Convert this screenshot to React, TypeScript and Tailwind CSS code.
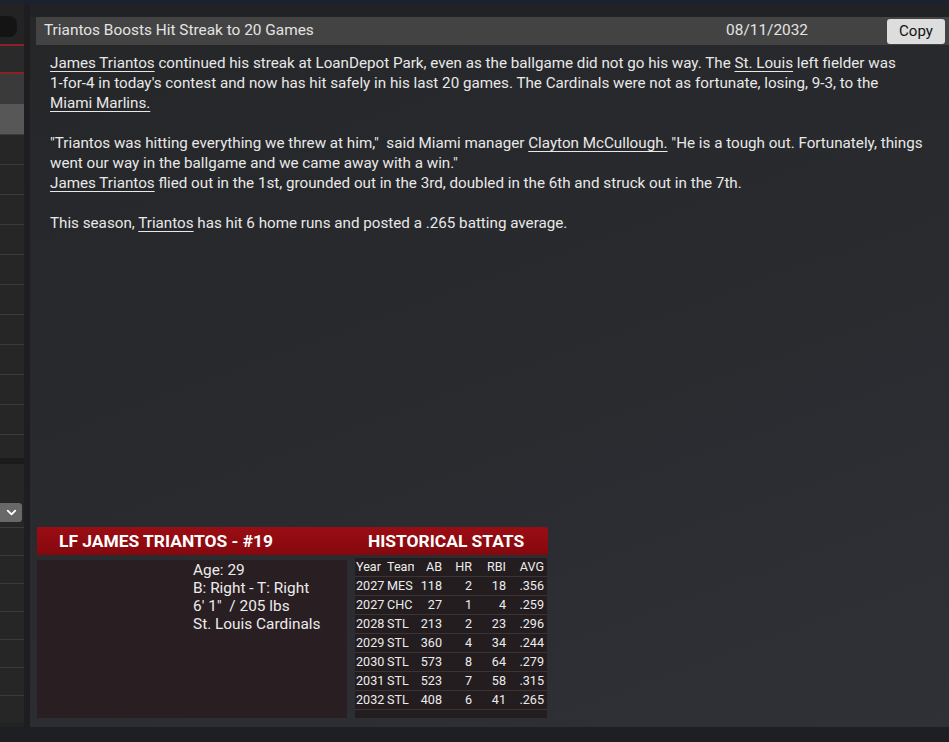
import { ChevronDown } from 'lucide-react';

const stats = [
    { year: '2027', team: 'MES', ab: 118, hr: 2, rbi: 18, avg: '.356' },
    { year: '2027', team: 'CHC', ab: 27, hr: 1, rbi: 4, avg: '.259' },
    { year: '2028', team: 'STL', ab: 213, hr: 2, rbi: 23, avg: '.296' },
    { year: '2029', team: 'STL', ab: 360, hr: 4, rbi: 34, avg: '.244' },
    { year: '2030', team: 'STL', ab: 573, hr: 8, rbi: 64, avg: '.279' },
    { year: '2031', team: 'STL', ab: 523, hr: 7, rbi: 58, avg: '.315' },
    { year: '2032', team: 'STL', ab: 408, hr: 6, rbi: 41, avg: '.265' },
];

function Link({ children }: { children: React.ReactNode }) {
    return <span className="underline underline-offset-[3px] decoration-1">{children}</span>;
}

function Sidebar() {
    const rows = Array.from({ length: 10 });
    const lower = Array.from({ length: 7 });
    return (
        <div className="w-[24px] shrink-0 flex flex-col bg-[#232323] overflow-hidden">
            <div className="h-[13px]" />
            <div className="h-[21px] w-[17px] bg-[#141414] rounded-r-[8px]" />
            <div className="h-[7px]" />
            <div className="h-[2px] bg-[#8a2228]" />
            <div className="h-[26px] bg-[#2a2a2a]" />
            <div className="h-[2px] bg-[#8a2228]" />
            <div className="h-[30px] bg-[#3a3a3a]" />
            <div className="h-[30px] bg-[#575757]" />
            {rows.map((_, i) => (
                <div key={i} className="h-[30px] bg-[#262626] border-t border-[#3a3a3a]" />
            ))}
            <div className="h-[24px] bg-[#262626] border-t border-[#3a3a3a]" />
            <div className="h-[6px] bg-[#1b1b1b]" />
            <div className="h-[39px] bg-[#262626]" />
            <div className="h-[19px] w-[22px] bg-[#686868] rounded-r-[3px] flex items-center justify-center">
                <ChevronDown size={15} strokeWidth={3} className="text-white" />
            </div>
            <div className="h-[5px] bg-[#262626]" />
            {lower.map((_, i) => (
                <div key={i} className="h-[28px] shrink-0 bg-[#262626] border-t border-[#3a3a3a]" />
            ))}
        </div>
    );
}

function PlayerCard() {
    return (
        <div className="ml-[7px] w-[511px] flex flex-col">
            <div className="h-[28px] flex items-center rounded-tr-[3px] bg-[linear-gradient(180deg,#9a0d14,#85080e)] text-white font-bold text-[17.4px]">
                <span className="pl-[22px] w-[331px]">LF JAMES TRIANTOS - #19</span>
                <span>HISTORICAL STATS</span>
            </div>
            <div className="flex mt-[3px] h-[163px]">
                <div className="w-[310px] mt-[2px] h-[158px] bg-[#291e21] pl-[156px] pt-[1px] text-[15.4px] leading-[18px] text-[#ececec]">
                    <div>Age: 29</div>
                    <div>B: Right - T: Right</div>
                    <div>6' 1"&nbsp; / 205 lbs</div>
                    <div>St. Louis Cardinals</div>
                </div>
                <div className="ml-[8px] w-[192px] bg-[#241d20] text-[12.6px] text-[#ececec] h-[160px]">
                    <div className="flex h-[19px] items-center border-b border-[#3b3437]">
                        <span className="w-[32px] pl-[1px]">Year</span>
                        <span className="w-[27px] overflow-hidden whitespace-nowrap">Team</span>
                        <span className="w-[28px] text-right">AB</span>
                        <span className="w-[30px] text-right">HR</span>
                        <span className="w-[34px] text-right">RBI</span>
                        <span className="w-[38px] text-right">AVG</span>
                    </div>
                    {stats.map((s, i) => (
                        <div key={i} className="flex h-[19px] items-center border-b border-[#3b3437]">
                            <span className="w-[32px] pl-[1px]">{s.year}</span>
                            <span className="w-[27px] overflow-hidden whitespace-nowrap">{s.team}</span>
                            <span className="w-[28px] text-right">{s.ab}</span>
                            <span className="w-[30px] text-right">{s.hr}</span>
                            <span className="w-[34px] text-right">{s.rbi}</span>
                            <span className="w-[38px] text-right">{s.avg}</span>
                        </div>
                    ))}
                </div>
            </div>
        </div>
    );
}

export default function App() {
    return (
        <div className="w-[949px] h-[742px] overflow-hidden flex flex-col bg-[#1e1f23] font-['Roboto',sans-serif]">
            <div className="h-[3px] bg-[#1a2133]" />
            <div className="flex h-[724px]">
                <Sidebar />
                <div className="w-[6px] bg-[#1e1e20]" />
                <div className="flex-1 flex flex-col bg-[linear-gradient(160deg,#252628_0%,#2a2b2f_55%,#2f3137_100%)]">
                    <div className="h-[14px] bg-[#212225]" />
                    <div className="ml-[6px] h-[28px] bg-[#434343] flex items-center text-[15.4px] text-[#e4e4e4]">
                        <span className="pl-[8px]">Triantos Boosts Hit Streak to 20 Games</span>
                        <span className="ml-auto mr-[79px]">08/11/2032</span>
                        <button className="w-[58px] h-[25px] mr-[4px] bg-[#dddddd] rounded-[3px] text-[#111] text-[15px]">Copy</button>
                    </div>
                    <div className="mt-[8px] pl-[20px] text-[15.2px] leading-[20px] text-[#e8e8e8] whitespace-nowrap flex-1">
                        <div><Link>James Triantos</Link> continued his streak at LoanDepot Park, even as the ballgame did not go his way. The <Link>St. Louis</Link> left fielder was</div>
                        <div>1-for-4 in today's contest and now has hit safely in his last 20 games. The Cardinals were not as fortunate, losing, 9-3, to the</div>
                        <div><Link>Miami Marlins.</Link></div>
                        <div className="h-[20px]" />
                        <div>"Triantos was hitting everything we threw at him,"&nbsp; said Miami manager <Link>Clayton McCullough.</Link> "He is a tough out. Fortunately, things</div>
                        <div>went our way in the ballgame and we came away with a win."</div>
                        <div><Link>James Triantos</Link> flied out in the 1st, grounded out in the 3rd, doubled in the 6th and struck out in the 7th.</div>
                        <div className="h-[20px]" />
                        <div>This season, <Link>Triantos</Link> has hit 6 home runs and posted a .265 batting average.</div>
                    </div>
                    <PlayerCard />
                    <div className="h-[6px]" />
                </div>
            </div>
            <div className="flex-1 bg-[#1e1f23]" />
        </div>
    );
}
